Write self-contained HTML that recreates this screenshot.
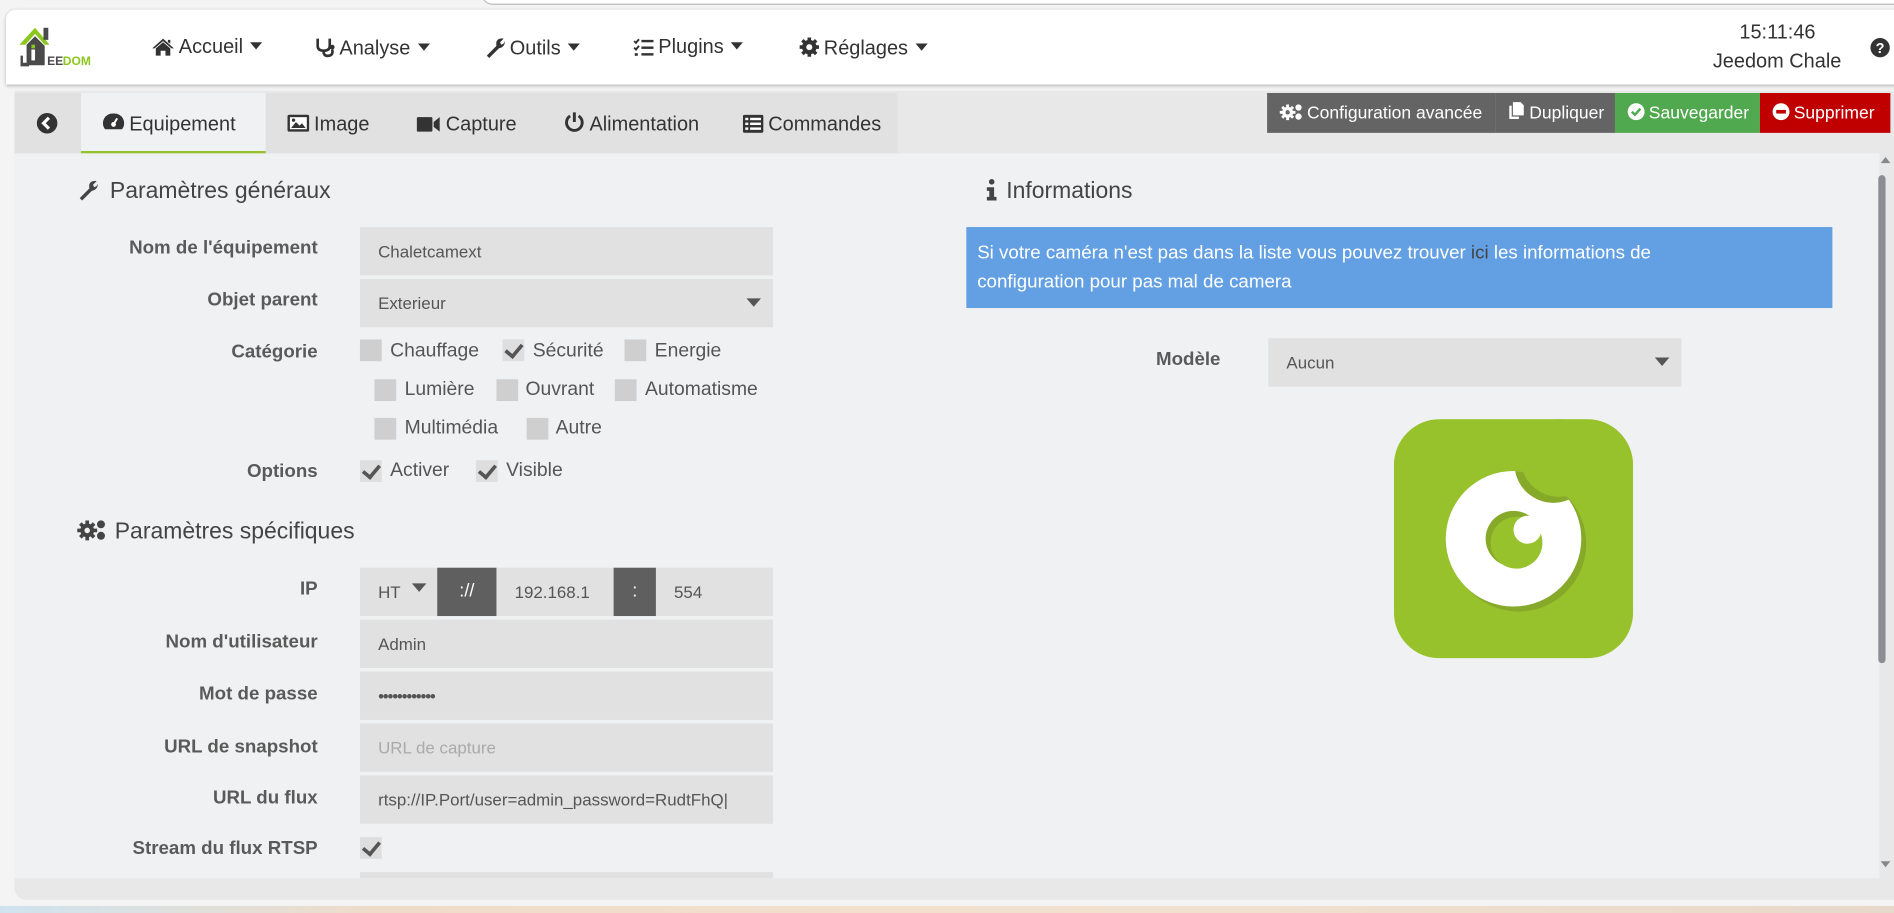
<!DOCTYPE html>
<html><head><meta charset="utf-8">
<style>
*{box-sizing:border-box;margin:0;padding:0}
html,body{width:1894px;height:913px;overflow:hidden;background:#f4f4f4}
#s{position:absolute;left:0;top:0;width:1568px;height:756px;transform:scale(1.20791);transform-origin:0 0;font-family:"Liberation Sans",sans-serif;color:#555;background:#f4f4f4}
.a{position:absolute}
.nav{left:5px;top:8px;width:1570px;height:62px;background:#fff;border-radius:8px 0 0 0;box-shadow:0 1px 3px rgba(0,0,0,.25)}
.mi{position:absolute;top:30px;font-size:16.5px;color:#333;white-space:nowrap}
.mi svg{vertical-align:-3px;margin-right:3px}
.car{display:inline-block;width:0;height:0;border-left:5px solid transparent;border-right:5px solid transparent;border-top:6px solid #333;margin-left:6px;vertical-align:3px}
.body{left:12px;top:75px;width:1556px;height:670px;background:#e8e8e9;border-radius:0 0 0 10px}
.tabs{left:12px;top:77px;width:731px;height:50px;background:#e1e1e1}
.tab{position:absolute;top:78px;height:50px;line-height:50px;font-size:16.5px;color:#333;white-space:nowrap}
.tab svg{vertical-align:-2px;margin-right:4px}
.btn{position:absolute;top:77px;height:33px;line-height:35px;color:#fff;font-size:14.5px;white-space:nowrap;padding-left:10px}
.btn svg{vertical-align:-2px;margin-right:3px}
.panel{left:12px;top:127px;width:1544px;height:600px;background:#f0f1f2}
.h{position:absolute;font-size:19px;color:#444;white-space:nowrap}
.lb{position:absolute;right:1305px;font-size:15.5px;font-weight:bold;color:#5a5a5a;white-space:nowrap;text-align:right}
.in{position:absolute;left:298px;width:342px;height:40px;background:#e0e1e0;font-size:14px;color:#555;line-height:40px;padding-left:15px;white-space:nowrap;overflow:hidden}
.cb{position:absolute;width:18px;height:18px;background:#cfcfcf}
.ck{position:absolute;width:18px;height:18px;background:#dedede}
.ck:after{content:"";position:absolute;left:5px;top:1px;width:6px;height:11px;border-right:3px solid #555;border-bottom:3px solid #555;transform:rotate(40deg)}
.ct{position:absolute;font-size:16px;color:#555;white-space:nowrap}
.sel:after{content:"";position:absolute;right:10px;top:16px;border-left:6px solid transparent;border-right:6px solid transparent;border-top:7px solid #555}
</style></head><body><div id="s">
<div class="a" style="left:398px;top:-20px;width:1300px;height:24px;border:1px solid #bbb;border-radius:10px;background:#fff"></div>
<div class="a nav"></div>
<!-- logo -->
<svg class="a" style="left:14px;top:17px" width="64" height="40" viewBox="0 0 64 40">
<path d="M2 20 L15 6 L27 20 L23 20 L15 11 L7 20Z" fill="#8cc71f"/>
<rect x="22" y="6" width="4" height="10" fill="#4a4a4a"/>
<path d="M8 20 L15 13 L23 21 L23 37 L8 37Z" fill="#4a4a4a"/>
<rect x="12" y="24" width="3" height="9" fill="#fff"/>
<rect x="12" y="20" width="3" height="3" fill="#8cc71f"/>
<path d="M3 29 L5 29 L5 35 L10 35 L10 38 L3 38Z" fill="#4a4a4a"/>
<text x="25" y="37" font-family="Liberation Sans" font-weight="bold" font-size="10" fill="#4a4a4a">EE</text>
<text x="38" y="37" font-family="Liberation Sans" font-weight="bold" font-size="10" fill="#8cc71f">DOM</text>
</svg>
<div class="mi" style="left:125px"><svg width="20" height="16" viewBox="0 0 20 16"><path d="M10 1 L1 9 L3 9 L10 3 L17 9 L19 9Z M4 9 L10 4 L16 9 L16 15 L12 15 L12 11 L8 11 L8 15 L4 15Z M14 2 L16 2 L16 5 L14 4Z" fill="#333"/></svg>Accueil<span class="car"></span></div>
<div class="mi" style="left:260px"><svg width="18" height="18" viewBox="0 0 18 18"><path d="M3 2 L3 8 Q3 12 8 12 Q13 12 13 8 L13 2 M8 12 L8 14 Q9 17 13 16 Q16 15 15 11" stroke="#333" stroke-width="2.2" fill="none"/><circle cx="15" cy="9" r="2" fill="#333"/></svg>Analyse<span class="car"></span></div>
<div class="mi" style="left:401px"><svg width="18" height="18" viewBox="0 0 18 18"><path d="M2 16 L10 8 Q9 3 13 2 Q15 1.5 16 2 L13 5 L14 7 L16 6 L17 4 Q17 9 12 10 L4 18Z" fill="#333"/></svg>Outils<span class="car"></span></div>
<div class="mi" style="left:524px"><svg width="18" height="16" viewBox="0 0 18 16"><path d="M1 3 L2.5 4.5 L5 1.5 M1 8.5 L2.5 10 L5 7" stroke="#333" stroke-width="1.6" fill="none"/><rect x="1.5" y="13" width="2.5" height="2.2" fill="#333"/><rect x="7" y="2" width="10" height="2" fill="#333"/><rect x="7" y="7.5" width="10" height="2" fill="#333"/><rect x="7" y="13" width="10" height="2" fill="#333"/></svg>Plugins<span class="car"></span></div>
<div class="mi" style="left:661px"><svg width="18" height="18" viewBox="0 0 18 18"><circle cx="9" cy="9" r="6" fill="#333"/><g stroke="#333" stroke-width="3"><path d="M9 1v16M1 9h16M3.3 3.3l11.4 11.4M14.7 3.3L3.3 14.7"/></g><circle cx="9" cy="9" r="2.5" fill="#fff"/></svg>Réglages<span class="car"></span></div>
<div class="a" style="left:1440px;top:18px;font-size:16.5px;color:#333">15:11:46</div>
<div class="a" style="left:1418px;top:42px;font-size:16.5px;color:#333">Jeedom Chale</div>
<svg class="a" style="left:1548px;top:31px" width="17" height="17" viewBox="0 0 17 17"><circle cx="8.5" cy="8.5" r="8" fill="#333"/><text x="8.5" y="13" text-anchor="middle" font-family="Liberation Sans" font-weight="bold" font-size="12" fill="#fff">?</text></svg>
<div class="a body"></div>
<div class="a tabs"></div>
<svg class="a" style="left:30px;top:93px" width="18" height="18" viewBox="0 0 18 18"><circle cx="9" cy="9" r="8.5" fill="#333"/><path d="M10.5 4.5 L6 9 L10.5 13.5" stroke="#fff" stroke-width="2.6" fill="none"/></svg>
<div class="a" style="left:67px;top:77px;width:153px;height:50px;background:#f0f1f2;border-bottom:2px solid #94c12d"></div>
<div class="tab" style="left:85px"><svg width="18" height="17" viewBox="0 0 18 17"><path d="M9 1 A8 8 0 0 0 2 14 L16 14 A8 8 0 0 0 9 1Z" fill="#333"/><circle cx="9" cy="10" r="2" fill="#fff"/><path d="M9 10 L12 5" stroke="#fff" stroke-width="1.6"/></svg>Equipement</div>
<div class="tab" style="left:238px"><svg width="18" height="16" viewBox="0 0 18 16"><rect x="0" y="1" width="18" height="14" rx="1.5" fill="#333"/><rect x="2" y="3" width="14" height="10" fill="#fff"/><path d="M3 12 L7 7 L10 10 L12 8 L15 12Z" fill="#333"/><circle cx="5" cy="5.5" r="1.4" fill="#333"/></svg>Image</div>
<div class="tab" style="left:345px"><svg width="20" height="14" viewBox="0 0 20 14"><rect x="0" y="1" width="13" height="12" rx="1" fill="#333"/><path d="M14 5 L19 1 L19 13 L14 9Z" fill="#333"/></svg>Capture</div>
<div class="tab" style="left:467px"><svg width="17" height="18" viewBox="0 0 17 18"><path d="M5 4 A6.5 6.5 0 1 0 12 4" stroke="#333" stroke-width="2.4" fill="none"/><path d="M8.5 1 L8.5 9" stroke="#333" stroke-width="2.4"/></svg>Alimentation</div>
<div class="tab" style="left:615px"><svg width="17" height="15" viewBox="0 0 17 15"><rect x="0" y="0" width="17" height="15" rx="1.5" fill="#333"/><g fill="#fff"><rect x="2" y="2.5" width="2.5" height="2"/><rect x="6" y="2.5" width="9" height="2"/><rect x="2" y="6.5" width="2.5" height="2"/><rect x="6" y="6.5" width="9" height="2"/><rect x="2" y="10.5" width="2.5" height="2"/><rect x="6" y="10.5" width="9" height="2"/></g></svg>Commandes</div>
<div class="btn" style="left:1049px;width:189px;background:#646464"><svg width="20" height="15" viewBox="0 0 20 15"><circle cx="7" cy="8" r="4.5" fill="#fff"/><g stroke="#fff" stroke-width="2.4"><path d="M7 1.5v13M0.5 8h13M2.5 3.5l9 9M11.5 3.5l-9 9"/></g><circle cx="7" cy="8" r="1.8" fill="#646464"/><circle cx="16" cy="4" r="2.6" fill="#fff"/><circle cx="16" cy="11.5" r="2.6" fill="#fff"/></svg>Configuration avancée</div>
<div class="btn" style="left:1238px;width:99px;background:#646464"><svg width="15" height="16" viewBox="0 0 15 16"><rect x="1" y="3" width="9" height="12" fill="#fff" stroke="#646464"/><path d="M4 0 L11 0 L14 3 L14 12 L4 12Z" fill="#fff" stroke="#646464"/></svg>Dupliquer</div>
<div class="btn" style="left:1337px;width:120px;background:#51a94f"><svg width="15" height="15" viewBox="0 0 15 15"><circle cx="7.5" cy="7.5" r="7" fill="#fff"/><path d="M4 7.5 L6.5 10 L11 5" stroke="#51a94f" stroke-width="2" fill="none"/></svg>Sauvegarder</div>
<div class="btn" style="left:1457px;width:108px;background:#c00000"><svg width="15" height="15" viewBox="0 0 15 15"><circle cx="7.5" cy="7.5" r="7" fill="#fff"/><rect x="3.5" y="6" width="8" height="3" fill="#c00000"/></svg>Supprimer</div>
<div class="a panel"></div>
<!-- scrollbar -->
<div class="a" style="left:1557px;top:130px;border-left:4px solid transparent;border-right:4px solid transparent;border-bottom:5px solid #888"></div>
<div class="a" style="left:1555px;top:145px;width:6px;height:404px;border-radius:3px;background:#8c8c94"></div>
<div class="a" style="left:1557px;top:713px;border-left:4px solid transparent;border-right:4px solid transparent;border-top:5px solid #888"></div>
<!-- left column -->
<div class="h" style="left:63px;top:148px"><svg width="20" height="18" viewBox="0 0 18 18" style="vertical-align:-2px;margin-right:8px"><path d="M2 16 L10 8 Q9 3 13 2 Q15 1.5 16 2 L13 5 L14 7 L16 6 L17 4 Q17 9 12 10 L4 18Z" fill="#444"/></svg>Paramètres généraux</div>
<div class="lb" style="top:197px">Nom de l'équipement</div>
<div class="in" style="top:188px">Chaletcamext</div>
<div class="lb" style="top:240px">Objet parent</div>
<div class="in sel" style="top:231px">Exterieur</div>
<div class="lb" style="top:283px">Catégorie</div>
<div class="cb" style="left:298px;top:281px"></div><div class="ct" style="left:323px;top:282px">Chauffage</div>
<div class="ck" style="left:416px;top:281px"></div><div class="ct" style="left:441px;top:282px">Sécurité</div>
<div class="cb" style="left:517px;top:281px"></div><div class="ct" style="left:542px;top:282px">Energie</div>
<div class="cb" style="left:310px;top:314px"></div><div class="ct" style="left:335px;top:314px">Lumière</div>
<div class="cb" style="left:411px;top:314px"></div><div class="ct" style="left:435px;top:314px">Ouvrant</div>
<div class="cb" style="left:509px;top:314px"></div><div class="ct" style="left:534px;top:314px">Automatisme</div>
<div class="cb" style="left:310px;top:346px"></div><div class="ct" style="left:335px;top:346px">Multimédia</div>
<div class="cb" style="left:436px;top:346px"></div><div class="ct" style="left:460px;top:346px">Autre</div>
<div class="lb" style="top:382px">Options</div>
<div class="ck" style="left:298px;top:381px"></div><div class="ct" style="left:323px;top:381px">Activer</div>
<div class="ck" style="left:394px;top:381px"></div><div class="ct" style="left:419px;top:381px">Visible</div>
<div class="h" style="left:63px;top:429px"><svg width="26" height="19" viewBox="0 0 20 15" style="vertical-align:-2px;margin-right:6px"><circle cx="7" cy="8" r="4.5" fill="#444"/><g stroke="#444" stroke-width="2.4"><path d="M7 1.5v13M0.5 8h13M2.5 3.5l9 9M11.5 3.5l-9 9"/></g><circle cx="7" cy="8" r="1.8" fill="#f0f1f2"/><circle cx="16" cy="4" r="2.6" fill="#444"/><circle cx="16" cy="11.5" r="2.6" fill="#444"/></svg>Paramètres spécifiques</div>
<div class="lb" style="top:479px">IP</div>
<div class="in" style="top:470px">HT</div>
<div class="a" style="left:341px;top:483px;border-left:6px solid transparent;border-right:6px solid transparent;border-top:7px solid #555"></div>
<div class="a" style="left:362px;top:470px;width:49px;height:40px;background:#5f5f5f;color:#fff;font-size:15px;line-height:40px;text-align:center">://</div>
<div class="a" style="left:426px;top:470px;font-size:14px;line-height:40px;color:#555">192.168.1</div>
<div class="a" style="left:508px;top:470px;width:35px;height:40px;background:#5f5f5f;color:#fff;font-size:15px;line-height:40px;text-align:center">:</div>
<div class="a" style="left:558px;top:470px;font-size:14px;line-height:40px;color:#555">554</div>
<div class="lb" style="top:523px">Nom d'utilisateur</div>
<div class="in" style="top:513px">Admin</div>
<div class="lb" style="top:566px">Mot de passe</div>
<div class="in" style="top:556px;letter-spacing:-1px">••••••••••••</div>
<div class="lb" style="top:610px">URL de snapshot</div>
<div class="in" style="top:599px;color:#aaa">URL de capture</div>
<div class="lb" style="top:652px">URL du flux</div>
<div class="in" style="top:642px;padding-right:4px">rtsp://IP.Port/user=admin_password=RudtFhQ|</div>
<div class="lb" style="top:694px">Stream du flux RTSP</div>
<div class="ck" style="left:298px;top:693px"></div>
<div class="a" style="left:298px;top:722px;width:342px;height:5px;background:#e0e1e0"></div>
<!-- right column -->
<div class="h" style="left:816px;top:148px"><svg width="10" height="18" viewBox="0 0 10 18" style="vertical-align:-2px;margin-right:7px"><circle cx="5" cy="2.5" r="2.3" fill="#444"/><path d="M1 7 L7 7 L7 15 L9 15 L9 18 L1 18 L1 15 L3 15 L3 10 L1 10Z" fill="#444"/></svg>Informations</div>
<div class="a" style="left:800px;top:188px;width:717px;height:67px;background:#63a0e3;color:#fff;font-size:15.5px;line-height:24px;padding:10px 0 0 9px">Si votre caméra n'est pas dans la liste vous pouvez trouver <span style="color:#444">ici</span> les informations de<br>configuration pour pas mal de camera</div>
<div class="a" style="left:957px;top:289px;font-size:15.5px;font-weight:bold;color:#5a5a5a">Modèle</div>
<div class="a sel" style="left:1050px;top:280px;width:342px;height:40px;background:#e0e1e0;font-size:14px;line-height:40px;padding-left:15px;color:#555">Aucun</div>
<svg class="a" style="left:1154px;top:347px" width="198" height="198" viewBox="0 0 240 240">
<defs><clipPath id="rc"><circle cx="120" cy="120" r="68"/></clipPath></defs>
<rect x="0" y="0" width="240" height="240" rx="46" fill="#97c22c"/>
<circle cx="125" cy="125" r="68" fill="#87a92a"/>
<circle cx="120" cy="120" r="68" fill="#fff"/>
<g clip-path="url(#rc)"><circle cx="160" cy="45" r="39" fill="#87a92a"/></g>
<circle cx="166" cy="39" r="39" fill="#97c22c"/>
<circle cx="120" cy="120" r="28" fill="#87a92a"/>
<circle cx="123" cy="124" r="26" fill="#97c22c"/>
<circle cx="134" cy="111" r="14" fill="#fff"/>
</svg>
<!-- desktop strip -->
<div class="a" style="left:0;top:750px;width:1568px;height:6px;background:linear-gradient(90deg,#cfe3ef,#efdcc8 20%,#f3e1cf 60%,#e7d9c9)"></div>
</div></body></html>
